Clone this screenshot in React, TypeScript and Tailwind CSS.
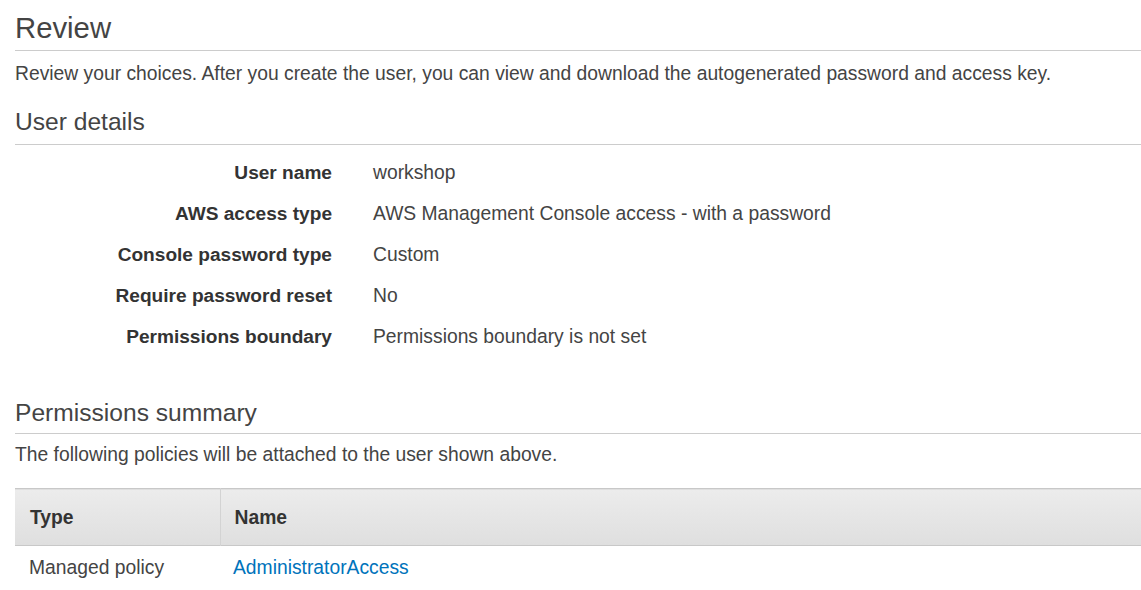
import React from "react";

const details: { label: string; value: string }[] = [
  { label: "User name", value: "workshop" },
  { label: "AWS access type", value: "AWS Management Console access - with a password" },
  { label: "Console password type", value: "Custom" },
  { label: "Require password reset", value: "No" },
  { label: "Permissions boundary", value: "Permissions boundary is not set" },
];

const App: React.FC = () => {
  return (
    <div className="min-h-[590px] bg-white pl-[15px] font-['Liberation_Sans',Arial,sans-serif] text-[#444]">
      {/* Review */}
      <h1 className="border-b border-[#ccc] pt-[11px] pb-[5px] text-[29.3px] font-normal leading-[34px]">
        Review
      </h1>
      <p className="mt-[12px] text-[19.3px] leading-[22px]">
        Review your choices. After you create the user, you can view and download the autogenerated
        password and access key.
      </p>

      {/* User details */}
      <h2 className="mt-[22px] border-b border-[#ccc] pb-[7px] text-[24.6px] font-normal leading-[30px]">
        User details
      </h2>
      <div className="mt-[7px]">
        {details.map((d) => (
          <div key={d.label} className="flex h-[41px] items-center pt-[2px]">
            <div className="w-[317px] text-right text-[19.1px] font-bold text-[#333]">{d.label}</div>
            <div className="ml-[41px] text-[19.3px]">{d.value}</div>
          </div>
        ))}
      </div>

      {/* Permissions summary */}
      <h2 className="mt-[41px] border-b border-[#ccc] pb-[5px] text-[24.6px] font-normal leading-[30px]">
        Permissions summary
      </h2>
      <p className="mt-[10px] text-[19.3px] leading-[22px]">
        The following policies will be attached to the user shown above.
      </p>

      <table className="mt-[22px] w-full border-collapse text-[19.3px]">
        <thead>
          <tr className="h-[57px] border-y border-[#c8c8c8] bg-gradient-to-b from-[#ececec] to-[#dfdfdf]">
            <th className="w-[205px] border-r border-[#d3d3d3] pt-[2px] pl-[15px] text-left font-bold text-[#333]">
              Type
            </th>
            <th className="pt-[2px] pl-[14px] text-left font-bold text-[#333]">Name</th>
          </tr>
        </thead>
        <tbody>
          <tr className="h-[43px]">
            <td className="pt-[2px] pl-[14px]">Managed policy</td>
            <td className="pt-[2px] pl-[13px]">
              <a href="#" className="text-[#0073bb]">
                AdministratorAccess
              </a>
            </td>
          </tr>
        </tbody>
      </table>
    </div>
  );
};

export default App;
